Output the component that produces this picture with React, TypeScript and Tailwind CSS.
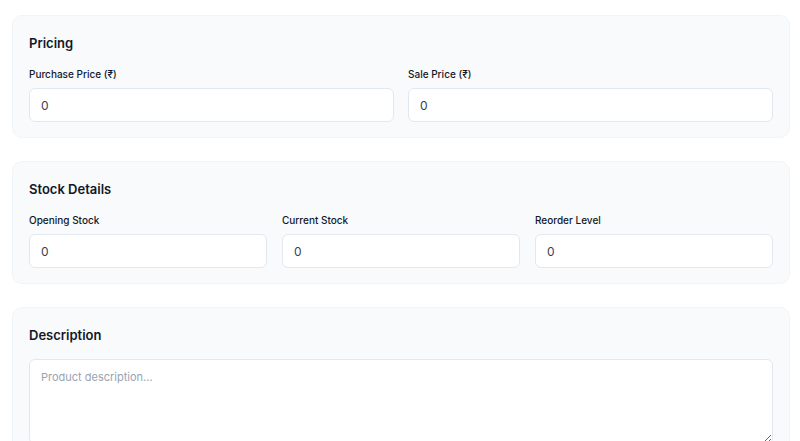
export default function App() {
  const Field = ({ label }: { label: string }) => (
    <div className="flex flex-col">
      <label className="text-[10px] font-medium text-[#111827] leading-[14px] mb-[7px]">{label}</label>
      <input defaultValue="0" className="h-[34px] rounded-[6px] border border-[#e2e8f0] bg-white px-[11px] text-[12px] text-[#374151] outline-none" />
    </div>
  );
  const Card = ({ title, children }: { title: string; children: React.ReactNode }) => (
    <div className="rounded-[10px] border border-[#f1f5f9] bg-[#f8fafc] px-[16px] pt-[18px] pb-[15px]">
      <h2 className="text-[13px] font-semibold text-[#111827] leading-[18px] mb-[15px]">{title}</h2>
      {children}
    </div>
  );
  return (
    <div className="w-[800px] h-[441px] overflow-hidden bg-white pl-[12px] pr-[10px] pt-[15px] flex flex-col gap-[23px]" style={{ fontFamily: "Inter, 'Noto Sans', sans-serif" }}>
      <Card title="Pricing">
        <div className="grid grid-cols-2 gap-[14px]">
          <Field label="Purchase Price (₹)" />
          <Field label="Sale Price (₹)" />
        </div>
      </Card>
      <Card title="Stock Details">
        <div className="grid grid-cols-3 gap-[15px]">
          <Field label="Opening Stock" />
          <Field label="Current Stock" />
          <Field label="Reorder Level" />
        </div>
      </Card>
      <Card title="Description">
        <textarea placeholder="Product description..." className="block w-full h-[85px] rounded-[6px] border border-[#e2e8f0] bg-white px-[11px] py-[9px] text-[11px] placeholder:text-[#9ca3af] outline-none" />
      </Card>
    </div>
  );
}
